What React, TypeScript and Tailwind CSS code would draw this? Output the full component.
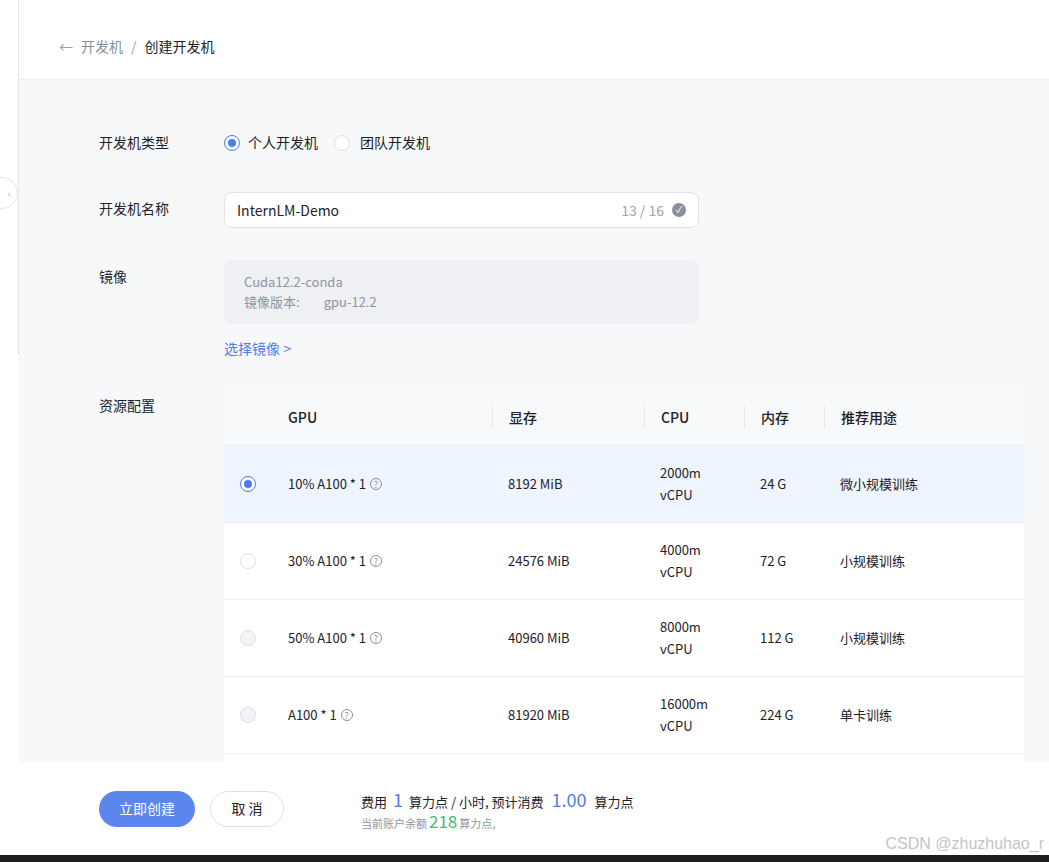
import React from 'react';

const rows = [
  { gpu: '10% A100 * 1', mem: '8192 MiB', cpu: '2000m', ram: '24 G', use: '微小规模训练', state: 'checked' },
  { gpu: '30% A100 * 1', mem: '24576 MiB', cpu: '4000m', ram: '72 G', use: '小规模训练', state: 'empty' },
  { gpu: '50% A100 * 1', mem: '40960 MiB', cpu: '8000m', ram: '112 G', use: '小规模训练', state: 'disabled' },
  { gpu: 'A100 * 1', mem: '81920 MiB', cpu: '16000m', ram: '224 G', use: '单卡训练', state: 'disabled' },
];

function Radio({ state }: { state: string }) {
  if (state === 'checked')
    return (
      <span className="flex h-[16px] w-[16px] items-center justify-center rounded-full border border-[#4d7cf0] bg-white">
        <span className="h-[8px] w-[8px] rounded-full bg-[#4d7cf0]" />
      </span>
    );
  return (
    <span
      className={`block h-[16px] w-[16px] rounded-full border border-[#dcdfe6] ${state === 'disabled' ? 'bg-[#f2f3f5]' : 'bg-white'}`}
    />
  );
}

function Help() {
  return (
    <span className="ml-[4px] inline-flex h-[12px] w-[12px] items-center justify-center rounded-full border border-[#8a8f99] text-[9px] leading-none text-[#8a8f99]">
      ?
    </span>
  );
}

export default function App() {
  const font = { fontFamily: '"Noto Sans CJK SC", "Noto Sans", sans-serif' };
  return (
    <div className="relative h-[862px] w-[1049px] overflow-hidden bg-white text-[14px] text-[#1d2129]" style={font}>
      {/* left collapse strip */}
      <div className="absolute left-[18px] top-0 h-[355px] w-px bg-[#e5e6eb]" />
      <div className="absolute left-[-14px] top-[177px] flex h-[32px] w-[32px] items-center justify-end rounded-full border border-[#e5e6eb] bg-white pr-[6px] text-[11px] text-[#b0b4bb]">
        ‹
      </div>

      <div className="ml-[19px]">
        <div className="flex h-[80px] items-center border-b border-[#eef0f3] pl-[40px] pt-[14px]">
          <span className="mr-[8px] text-[#9aa0a8]">←</span>
          <span className="text-[#86909c]">开发机</span>
          <span className="mx-[8px] text-[#a0a4ab]">/</span>
          <span className="text-[#1d2129]">创建开发机</span>
        </div>

        <div className="h-[682px] overflow-hidden bg-[#f7f8fa] pl-[80px] pt-[52px]">
          <div className="flex items-center">
            <div className="w-[125px]">开发机类型</div>
            <Radio state="checked" />
            <span className="ml-[8px]">个人开发机</span>
            <span className="ml-[16px]"><Radio state="empty" /></span>
            <span className="ml-[10px]">团队开发机</span>
          </div>

          <div className="mt-[39px] flex">
            <div className="w-[125px] pt-[6px]">开发机名称</div>
            <div className="flex h-[36px] w-[475px] items-center rounded-[8px] border border-[#dfe2e8] bg-white px-[12px]">
              <span className="flex-1">InternLM-Demo</span>
              <span className="text-[#a0a4ab]">13 / 16</span>
              <span className="ml-[8px] flex h-[14px] w-[14px] items-center justify-center rounded-full bg-[#8a8f99] text-[9px] text-white">✓</span>
            </div>
          </div>

          <div className="mt-[32px] flex">
            <div className="w-[125px] pt-[6px]">镜像</div>
            <div>
              <div className="flex h-[64px] w-[475px] flex-col justify-center rounded-[8px] bg-[#eff0f3] px-[20px] text-[13px] leading-[20px] text-[#8f959e]">
                <div>Cuda12.2-conda</div>
                <div>
                  镜像版本:<span className="ml-[24px]">gpu-12.2</span>
                </div>
              </div>
              <div className="mt-[14px] text-[#4d7cf0]">选择镜像 &gt;</div>
            </div>
          </div>

          <div className="mt-[30px] flex">
            <div className="w-[125px] pt-[6px]">资源配置</div>
            <div className="w-[800px]">
              <div className="flex h-[57px] items-center border-b border-[#eceef2] bg-[#f8f9fa] font-medium">
                <div className="w-[64px]" />
                <div className="w-[204px]">GPU</div>
                <div className="h-[22px] w-px bg-[#e5e6eb]" />
                <div className="w-[151px] pl-[16px]">显存</div>
                <div className="h-[22px] w-px bg-[#e5e6eb]" />
                <div className="w-[99px] pl-[16px]">CPU</div>
                <div className="h-[22px] w-px bg-[#e5e6eb]" />
                <div className="w-[79px] pl-[16px]">内存</div>
                <div className="h-[22px] w-px bg-[#e5e6eb]" />
                <div className="pl-[16px]">推荐用途</div>
              </div>
              {rows.map((r) => (
                <div
                  key={r.gpu}
                  className={`flex h-[77px] items-center border-b border-[#eceef2] text-[13px] ${r.state === 'checked' ? 'bg-[#eef5ff]' : 'bg-white'}`}
                >
                  <div className="flex w-[48px] justify-center"><Radio state={r.state} /></div>
                  <div className="w-[16px]" />
                  <div className="flex w-[205px] items-center">{r.gpu}<Help /></div>
                  <div className="w-[152px] pl-[15px]">{r.mem}</div>
                  <div className="w-[100px] pl-[15px] leading-[22px]">
                    <div>{r.cpu}</div>
                    <div>vCPU</div>
                  </div>
                  <div className="w-[80px] pl-[15px]">{r.ram}</div>
                  <div className="pl-[15px]">{r.use}</div>
                </div>
              ))}
              <div className="h-[40px] bg-white" />
            </div>
          </div>
        </div>

        <div className="flex h-[93px] items-center pl-[80px]">
          <button className="h-[36px] w-[96px] rounded-full bg-[#5b86ee] text-white">立即创建</button>
          <button className="ml-[15px] h-[36px] w-[74px] rounded-full border border-[#dcdfe6] bg-white">取 消</button>
          <div className="ml-[77px]">
            <div className="flex items-baseline whitespace-nowrap text-[13px]">
              <span>费用</span>
              <span className="mx-[6px] text-[18px] text-[#4d7cf0]">1</span>
              <span>算力点 / 小时, 预计消费</span>
              <span className="mx-[8px] text-[18px] text-[#4d7cf0]">1.00</span>
              <span>算力点</span>
            </div>
            <div className="flex items-baseline text-[11px] leading-[16px] text-[#8f959e]">
              当前账户余额<span className="mx-[2px] text-[17px] text-[#46b96d]">218</span>算力点,
            </div>
          </div>
        </div>
      </div>
      <div className="absolute bottom-[6px] right-[5px] text-[16px] text-[#c4c4c4]" style={{ fontFamily: '"Liberation Sans", sans-serif' }}>
        CSDN @zhuzhuhao_r
      </div>
      <div className="absolute bottom-0 left-0 h-[7px] w-full bg-[#1e1e1e]" />
    </div>
  );
}
